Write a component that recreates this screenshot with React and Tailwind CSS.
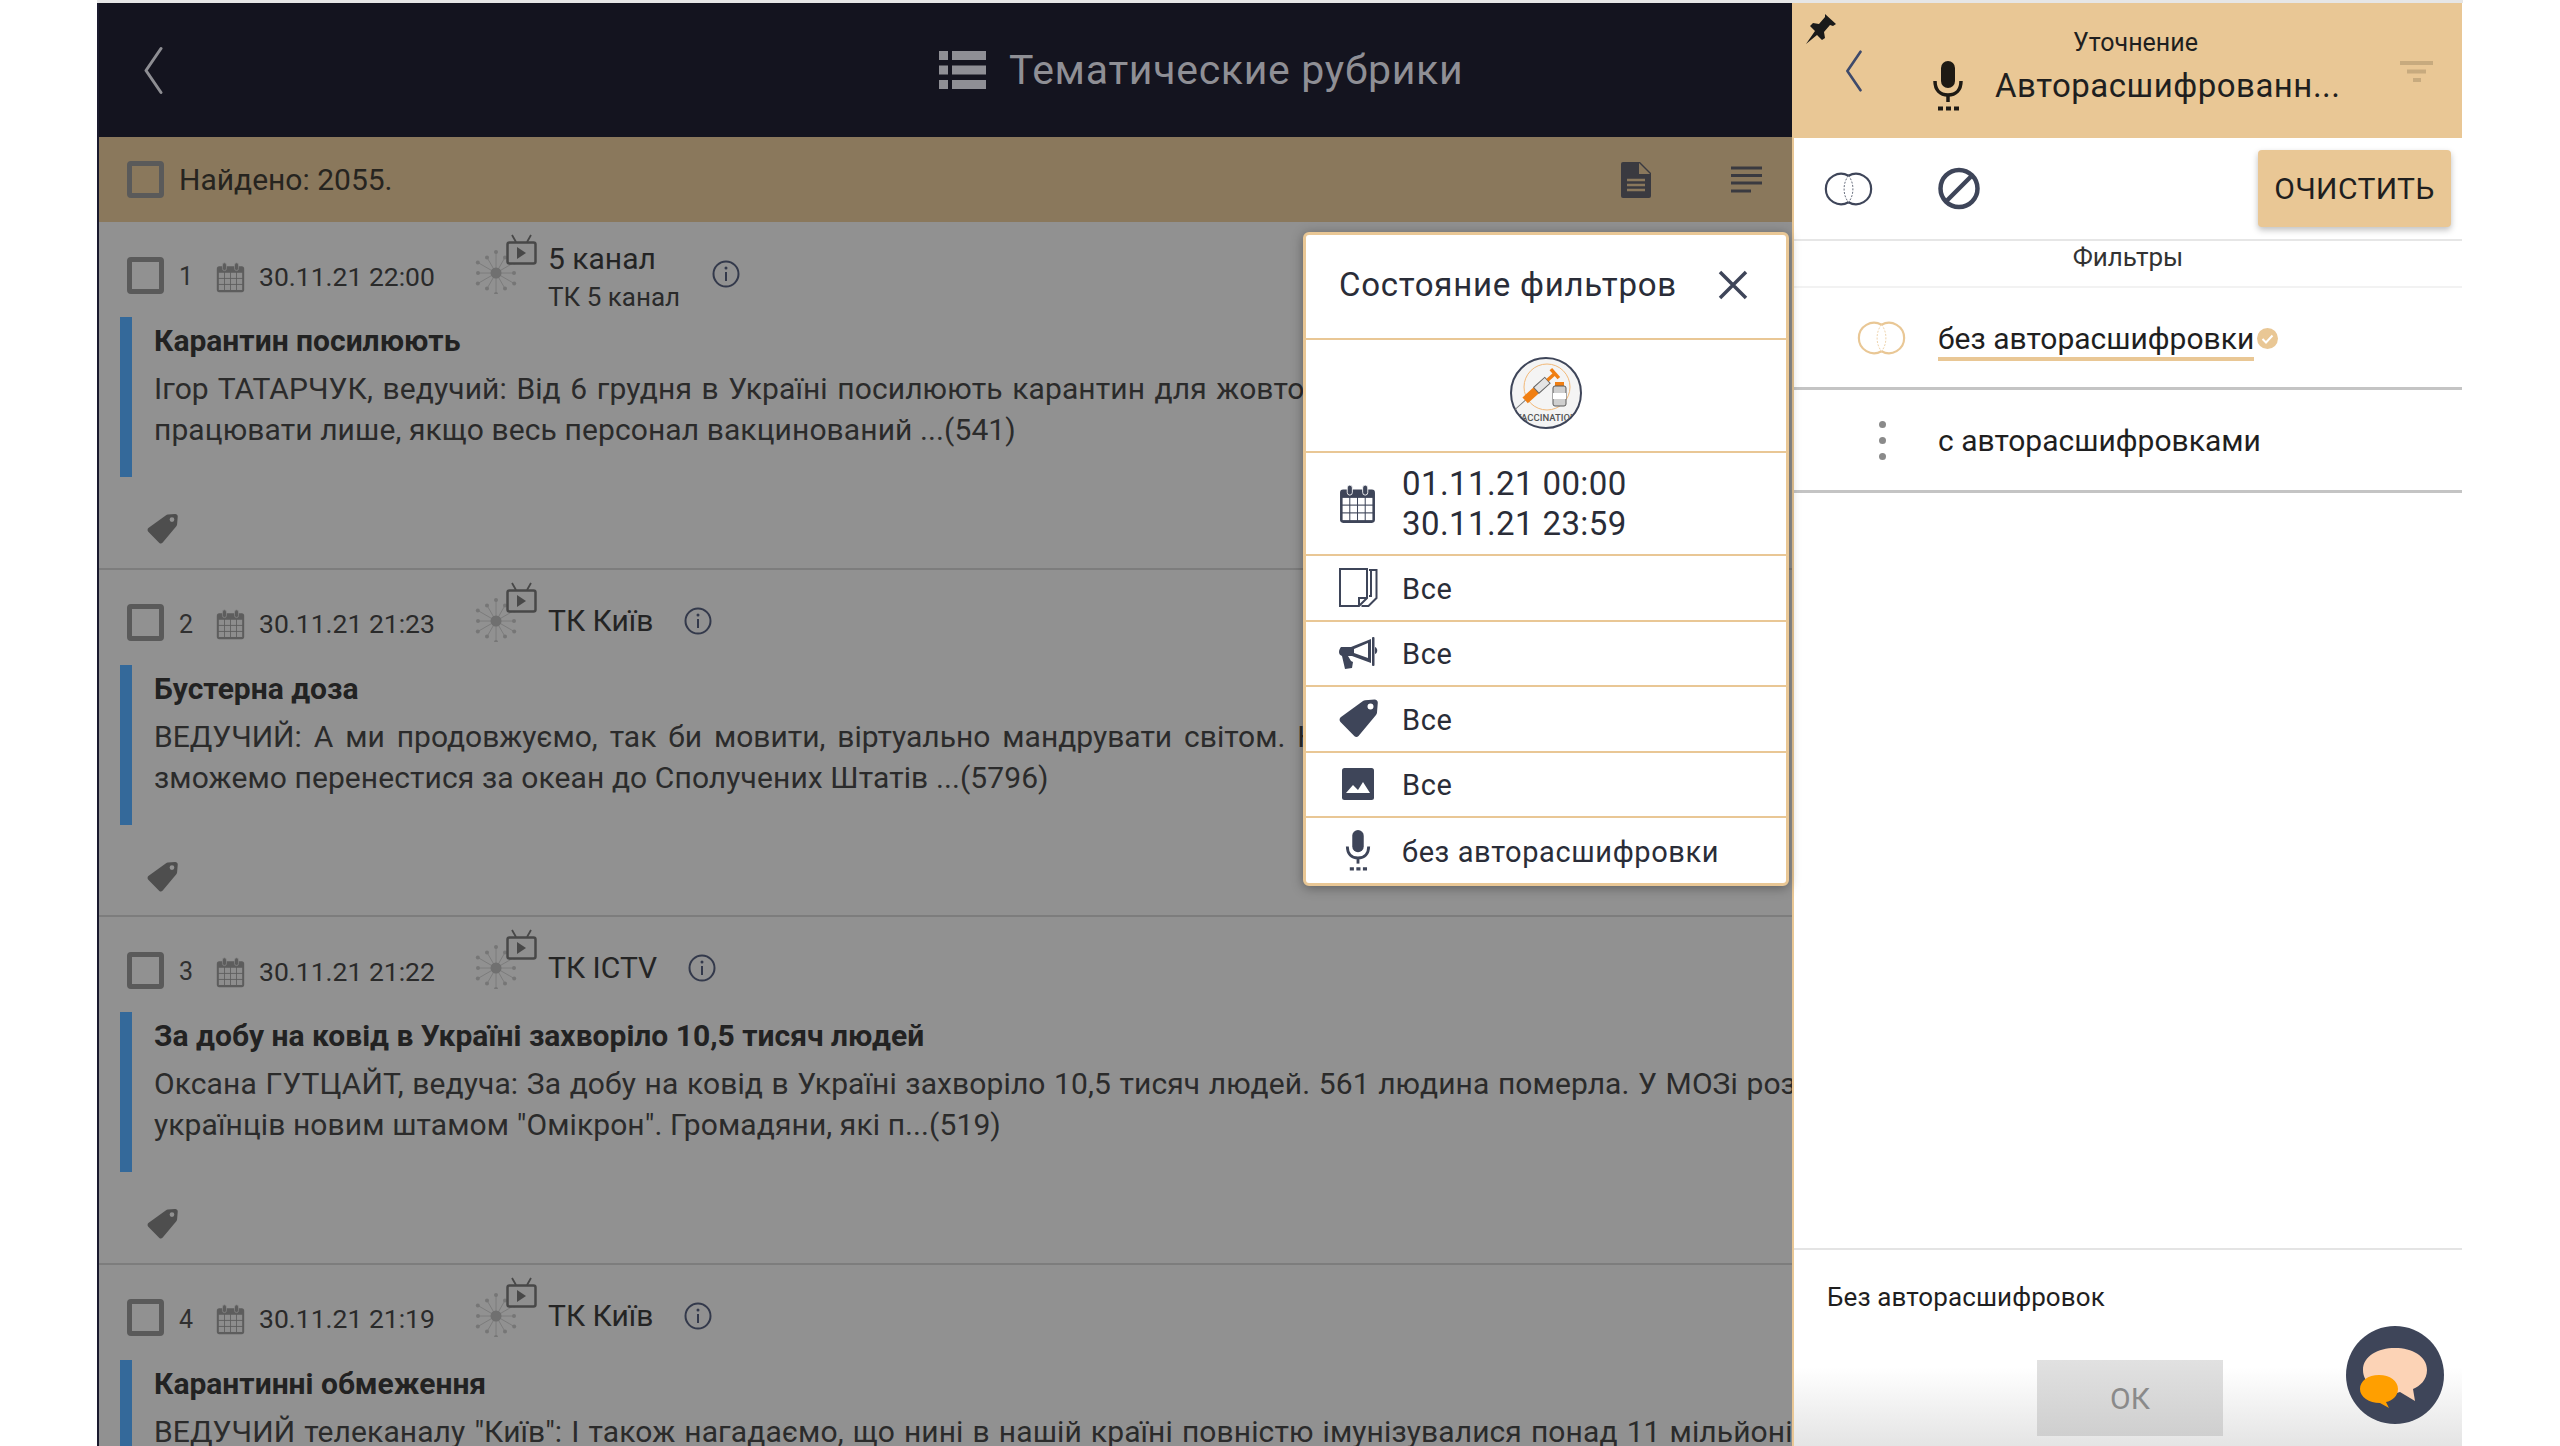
import { Fragment } from 'react'

function Chevron({ className, color }) {
  return (
    <svg className={className} viewBox="0 0 20 48" fill="none">
      <path d="M18 2L3 24l15 22" stroke={color} strokeWidth="3" strokeLinecap="round" strokeLinejoin="round" />
    </svg>
  )
}

function Checkbox() {
  return <div className="w-[37px] h-[37px] shrink-0 rounded-[4px] border-[5px] border-[#5a5a5a]" />
}

function Calendar({ className, color, cell }) {
  return (
    <svg className={className} viewBox="0 0 36 36" fill="none" preserveAspectRatio="none">
      <rect x="1" y="5" width="34" height="30" rx="3" fill={color} />
      <rect x="8" y="1" width="5" height="9" rx="2.500" fill={color} stroke={cell} strokeWidth="0.800" />
      <rect x="23" y="1" width="5" height="9" rx="2.500" fill={color} stroke={cell} strokeWidth="0.800" />
      <g fill={cell}>
        {[12.500, 19.500, 26.500].map(y =>
          [3.500, 11, 18.500, 26].map(x => <rect key={`${x}-${y}`} x={x} y={y} width="6.500" height="6" />)
        )}
      </g>
    </svg>
  )
}

function Mic({ className, color }) {
  return (
    <svg className={className} viewBox="0 0 30 50" fill="none">
      <rect x="8" y="0" width="14" height="27" rx="7" fill={color} />
      <path d="M2 20c0 9 5 14 13 14s13-5 13-14" stroke={color} strokeWidth="3.500" />
      <path d="M15 34v7" stroke={color} strokeWidth="3.500" />
      <path d="M5 47.500h5M13 47.500h5M21 47.500h5" stroke={color} strokeWidth="4" />
    </svg>
  )
}

function Tag({ className, color }) {
  return (
    <svg className={className} viewBox="0 0 39 38" fill="none">
      <path
        d="M2 17.500L24 1.500c.7-.5 1.400-.8 2.200-.8L35.500 0c2 0 3.400 1.300 3.300 3.200L38 13c0 1-.4 1.800-1 2.500L19.500 36.500c-1.100 1.300-2.800 1.300-4 .3L1.500 22.500c-1.400-1.400-1.200-3.800.5-5zM31.500 4a3 3 0 1 0 0 6 3 3 0 0 0 0-6z"
        fill={color}
        fillRule="evenodd"
      />
    </svg>
  )
}

function Rings({ className, color }) {
  return (
    <svg className={className} viewBox="0 0 50 34" fill="none">
      <path d="M25 3.500A15.500 15.500 0 1 0 25 30.500" stroke={color} strokeWidth="2.200" />
      <path d="M25 3.500A15.500 15.500 0 1 1 25 30.500" stroke={color} strokeWidth="2.200" />
      <path d="M25 3.500c-6 7-6 20 0 27 6-7 6-20 0-27z" stroke={color} strokeWidth="0.800" strokeDasharray="2 1.500" />
    </svg>
  )
}

function ChannelIcon() {
  const rays = [0, 30, 60, 90, 120, 150, 180, 210, 240, 270, 300, 330]
  return (
    <svg className="w-[62px] h-[60px] shrink-0 mb-[22px]" viewBox="0 0 62 60" fill="none">
      <g stroke="#7c7c7c" strokeWidth="1">
        {rays.map((a, i) => {
          const r = i % 2 ? 21 : 18
          const x = 21 + r * Math.cos((a * Math.PI) / 180)
          const y = 39 + r * Math.sin((a * Math.PI) / 180)
          return (
            <Fragment key={a}>
              <line x1="21" y1="39" x2={x} y2={y} />
              <circle cx={x} cy={y} r="2" fill="#767676" stroke="none" />
            </Fragment>
          )
        })}
      </g>
      <circle cx="21" cy="39" r="5.500" fill="#707070" />
      <rect x="32.500" y="8.500" width="28" height="21" rx="2" fill="#8f8f8f" stroke="#484848" strokeWidth="2.500" />
      <path d="M42 13l9 6-9 6z" fill="#484848" />
      <path d="M41 8l-4-7M52 8l4-7" stroke="#484848" strokeWidth="1.800" />
    </svg>
  )
}

function InfoIcon() {
  return (
    <svg className="w-[28px] h-[28px] shrink-0" viewBox="0 0 28 28" fill="none">
      <circle cx="14" cy="14" r="12.500" stroke="#33394b" strokeWidth="2" />
      <path d="M14 12v9" stroke="#33394b" strokeWidth="2" />
      <circle cx="14" cy="8" r="1.500" fill="#33394b" />
    </svg>
  )
}

function Row({ num, date, name, sub, infoGap, title, line1, line2, lineClass }) {
  return (
    <div className="h-[347.500px] shrink-0 border-b-2 border-[#7d7d7d]">
      <div className="h-[84px] mt-[11px] pl-[28px] flex items-center">
        <Checkbox />
        <span className="w-[52px] pl-[15px] shrink-0 text-[25px] text-[#303030] mt-[4px]">{num}</span>
        <Calendar className="w-[29px] h-[31px] shrink-0 mt-[4px]" color="#5d5d5d" cell="#8d8d8d" />
        <span className="w-[230px] pl-[14px] shrink-0 text-[26.500px] leading-none text-[#2a2a2a] mt-[4px]">{date}</span>
        <ChannelIcon />
        <div className={sub ? 'ml-[11px] flex flex-col mt-[3px]' : 'ml-[11px] flex flex-col -mt-[4px]'}>
          <span className="text-[30px] leading-[40px] text-[#242424]">{name}</span>
          {sub && <span className="text-[26px] leading-[36px] text-[#2a2a2a]">{sub}</span>}
        </div>
        <div className={infoGap}>
          <InfoIcon />
        </div>
      </div>
      <div className="flex pl-[21px]">
        <div className="w-[12px] h-[160px] shrink-0 bg-[#34699a]" />
        <div className="ml-[22px] min-w-0 flex-1 overflow-hidden whitespace-nowrap pt-[4px]">
          <div className="text-[30px] leading-[40px] font-bold text-[#222222]">{title}</div>
          <div className={lineClass}>{line1}</div>
          {line2 && <div className="text-[30px] leading-[41px] tracking-[0.1px] text-[#2b2b2b]">{line2}</div>}
        </div>
      </div>
      <Tag className="ml-[48px] mt-[37px] w-[31px] h-[30px]" color="#4e4e4e" />
    </div>
  )
}

function VaccineLogo() {
  return (
    <svg className="w-[72px] h-[72px] -mt-[5px]" viewBox="0 0 72 72" fill="none">
      <defs>
        <clipPath id="logo-clip">
          <circle cx="36" cy="36" r="34" />
        </clipPath>
      </defs>
      <circle cx="36" cy="36" r="35" fill="#f4f4f4" stroke="#3e4559" strokeWidth="2" />
      <circle cx="37" cy="30" r="23" stroke="#f2b877" strokeWidth="1" />
      <g transform="rotate(-42 30 30)">
        <path d="M-4 30h18" stroke="#777777" strokeWidth="1" />
        <rect x="10" y="26" width="15" height="8" fill="#f07f13" />
        <rect x="25" y="26" width="15" height="8" fill="#e4e4e4" stroke="#666666" strokeWidth="1" />
        <path d="M40 30h9" stroke="#f07f13" strokeWidth="3.500" />
        <path d="M50 24v12" stroke="#f07f13" strokeWidth="3.500" />
      </g>
      <rect x="45" y="25" width="9" height="4" fill="#f07f13" />
      <rect x="43" y="29" width="13" height="20" rx="2" fill="#cfcfcf" stroke="#5a5a5a" strokeWidth="1" />
      <rect x="43" y="36" width="13" height="6" fill="#ffffff" />
      <text x="36" y="64" textAnchor="middle" clipPath="url(#logo-clip)" fontFamily="Roboto, sans-serif" fontSize="9.500" fontWeight="500" fill="#555555">
        VACCINATION
      </text>
    </svg>
  )
}

function FilterState() {
  const icon = '#3e4559'
  const rows = [
    {
      label: 'Все',
      svg: (
        <svg className="w-[39px] h-[39px]" viewBox="0 0 39 39" fill="none">
          <path d="M1 1h27v29l-8 8H1z" stroke={icon} strokeWidth="2" fill="#fff" />
          <path d="M20 38v-8h8" stroke={icon} strokeWidth="2" />
          <path d="M30 2h7.500v28l-8 8h-7" stroke={icon} strokeWidth="2" />
          <path d="M32 2v26h-2" stroke={icon} strokeWidth="2" />
        </svg>
      ),
    },
    {
      label: 'Все',
      svg: (
        <svg className="w-[39px] h-[33px]" viewBox="0 0 39 33" fill="none">
          <path d="M2 10h10L32 2v24L13 19H9l3 5 2 1-1 6-7 1-3-13c-2-1-3-2-3-4s1-4 2-5z" fill={icon} />
          <path d="M15 12l14-6v15l-14-5z" fill="#fff" />
          <rect x="33" y="0" width="2.500" height="29" fill={icon} rx="1" />
          <path d="M36 10c3 1 3 6 0 7z" fill={icon} />
        </svg>
      ),
    },
    { label: 'Все', svg: <Tag className="w-[39px] h-[39px]" color={icon} /> },
    {
      label: 'Все',
      svg: (
        <svg className="w-[32px] h-[32px] ml-[3px]" viewBox="0 0 32 32" fill="none">
          <rect width="32" height="32" rx="2.500" fill={icon} />
          <path d="M4 25l7-8 5 5 5-8 7 11z" fill="#fff" />
        </svg>
      ),
    },
    { label: 'без авторасшифровки', svg: <Mic className="w-[26px] h-[41px] ml-[6px]" color={icon} /> },
  ]
  return (
    <div className="absolute left-[1303px] top-[232px] w-[486px] h-[654px] rounded-[6px] border-[3px] border-[#e9c795] bg-white shadow-[0_2px_12px_rgba(0,0,0,0.35)] font-['Roboto',sans-serif] text-[#2a2d38]">
      <div className="h-[105px] border-b-2 border-[#e9c795] flex items-center justify-between pl-[33px] pr-[38px]">
        <span className="text-[33px] tracking-[0.75px] -mt-[3px]">Состояние фильтров</span>
        <svg className="w-[30px] h-[30px] -mt-[3px]" viewBox="0 0 30 30" fill="none">
          <path d="M2 2l26 26M28 2L2 28" stroke={icon} strokeWidth="3.500" />
        </svg>
      </div>
      <div className="h-[113px] border-b-2 border-[#e9c795] flex items-center justify-center">
        <VaccineLogo />
      </div>
      <div className="h-[103px] border-b-2 border-[#e9c795] flex items-center pl-[33px]">
        <Calendar className="w-[37px] h-[40px]" color={icon} cell="#ffffff" />
        <div className="ml-[26px] text-[33px] leading-[40px] tracking-[0.4px]">
          <div>01.11.21 00:00</div>
          <div>30.11.21 23:59</div>
        </div>
      </div>
      {rows.map((r, i) => (
        <div
          key={i}
          className={i < 4 ? 'h-[65.500px] border-b-2 border-[#e9c795] flex items-center' : 'h-[65.500px] flex items-center'}
        >
          <div className="w-[96px] pl-[33px] shrink-0 flex items-center">{r.svg}</div>
          <span className="text-[29px] tracking-[0.6px] pt-[3px]">{r.label}</span>
        </div>
      ))}
    </div>
  )
}

function RefinePanel() {
  return (
    <div className="w-[670px] shrink-0 h-full flex flex-col bg-white relative text-[#1f1f1f] border-l-2 border-[#e9c795]">
      <div className="h-[135px] shrink-0 bg-[#e9c795] flex items-center relative">
        <svg className="absolute left-[11px] top-[10px] w-[32px] h-[32px]" viewBox="0 0 32 32" fill="none">
          <path d="M20 1l11 10-3 2-3-1-6 7 1 6-3 2-5-5L1 31l9-13-5-5 3-3 6 1 6-7z" fill="#1a1a1a" />
        </svg>
        <Chevron className="ml-[50px] w-[19px] h-[42px] shrink-0" color="#3e4a6b" />
        <div className="ml-[70px] flex flex-col items-start">
          <div className="w-[405px] text-center text-[25px] leading-[30px] -mt-[3px]">Уточнение</div>
          <div className="flex items-center mt-[3px]">
            <Mic className="w-[30px] h-[50px] shrink-0" color="#1e1a14" />
            <span className="ml-[32px] text-[33px] tracking-[0.5px]">Авторасшифрованн...</span>
          </div>
        </div>
        <svg className="absolute left-[606px] top-[58px] w-[33px] h-[22px]" viewBox="0 0 33 22" fill="none">
          <path d="M0 2h33M7 10.500h19M13 19h8" stroke="#c7aa7e" strokeWidth="4" />
        </svg>
      </div>
      <div className="h-[103px] shrink-0 border-b-2 border-[#e6e6e6] flex items-center pl-[30px] pr-[11px]">
        <Rings className="w-[49px] h-[34px]" color="#3e4559" />
        <svg className="ml-[65px] w-[42px] h-[43px]" viewBox="0 0 42 42" fill="none">
          <circle cx="21" cy="21" r="18.500" stroke="#3e4559" strokeWidth="4.500" />
          <path d="M8 34L34 8" stroke="#3e4559" strokeWidth="4.500" />
        </svg>
        <button className="ml-auto w-[193px] h-[77px] rounded-[4px] bg-[#e9c795] shadow-[0_3px_6px_rgba(0,0,0,0.25)] text-[30px] tracking-[0.4px]">
          ОЧИСТИТЬ
        </button>
      </div>
      <div className="h-[47px] shrink-0 border-b-2 border-[#f2f2f2] flex justify-center text-[26px] leading-[32px] text-[#333333]">
        Фильтры
      </div>
      <div className="h-[102px] shrink-0 border-b-[3px] border-[#c4c4c4] flex items-center pl-[63px]">
        <Rings className="w-[49px] h-[34px] shrink-0" color="#e9c795" />
        <span className="ml-[32px] mt-[6px] text-[30px] leading-[37px] border-b-[4px] border-[#e9c795]">без авторасшифровки</span>
        <svg className="w-[21px] h-[21px] ml-[3px] mt-[2px]" viewBox="0 0 21 21" fill="none">
          <circle cx="10.500" cy="10.500" r="10.500" fill="#e9c795" />
          <path d="M5.500 11l3.500 3.500 6.500-7" stroke="#fff" strokeWidth="2" />
        </svg>
      </div>
      <div className="h-[103px] shrink-0 border-b-[3px] border-[#c4c4c4] flex items-center pl-[63px]">
        <div className="w-[49px] flex flex-col items-center gap-[9px] shrink-0 ml-[1px]">
          <div className="w-[7px] h-[7px] rounded-full bg-[#8a8a8a]" />
          <div className="w-[7px] h-[7px] rounded-full bg-[#8a8a8a]" />
          <div className="w-[7px] h-[7px] rounded-full bg-[#8a8a8a]" />
        </div>
        <span className="ml-[31px] text-[30px]">с авторасшифровками</span>
      </div>
      <div className="flex-1 min-h-0" />
      <div className="h-[198px] shrink-0 border-t-2 border-[#e4e4e4] bg-gradient-to-b from-white from-[60%] to-[#e4e4e4] relative">
        <div className="pl-[33px] pt-[30px] text-[26px] tracking-[0.1px] leading-[34px]">Без авторасшифровок</div>
        <div className="w-[186px] h-[76px] mt-[46px] ml-[243px] bg-gradient-to-b from-[#e1e1e1] to-[#cfcfcf] flex items-center justify-center text-[30px] text-[#8a8a8a]">
          ОК
        </div>
        <svg className="absolute left-[552px] top-[76px] w-[98px] h-[98px]" viewBox="0 0 98 98" fill="none">
          <circle cx="49" cy="49" r="49" fill="#3e4559" />
          <path d="M17 44c0-14 15-22 32-22s32 8 32 22c0 10-7 16-14 19l2 12-15-9c-2 1-5 1-7 1-17 0-30-10-30-23z" fill="#fcd3b6" />
          <path d="M14 63c0-8 8-14 19-14s19 6 19 14c0 7-6 12-12 13l3 6-9-5c-11 0-20-6-20-14z" fill="#ff9f00" />
        </svg>
      </div>
    </div>
  )
}

export default function App() {
  return (
    <div className="w-[2560px] h-[1446px] bg-white overflow-hidden relative font-['Roboto',sans-serif]">
      <div className="h-[3px] bg-[#e6e6e6] mx-[97px]" />
      <div className="flex h-[1443px] ml-[97px]">
        <div className="w-[1695px] shrink-0 h-full overflow-hidden flex flex-col bg-[#919191] border-l-2 border-[#1a1a2e]">
          <div className="h-[134px] shrink-0 bg-[#14141f] flex items-center relative">
            <Chevron className="ml-[44px] w-[20px] h-[49px] shrink-0" color="#8e8e93" />
            <svg className="ml-[776px] w-[47px] h-[38px] shrink-0" viewBox="0 0 47 38" fill="#8f8f95">
              <rect width="9" height="9" />
              <rect x="13" width="34" height="9" />
              <rect y="14.500" width="9" height="9" />
              <rect x="13" y="14.500" width="34" height="9" />
              <rect y="29" width="9" height="9" />
              <rect x="13" y="29" width="34" height="9" />
            </svg>
            <span className="ml-[23px] mt-[2px] text-[41px] tracking-[0.7px] text-[#8f8f95]">Тематические рубрики</span>
          </div>
          <div className="h-[85px] shrink-0 bg-[#8a785c] flex items-center pl-[28px] pr-[30px]">
            <Checkbox />
            <span className="ml-[15px] text-[30px] text-[#26241f]">Найдено: 2055.</span>
            <svg className="ml-auto w-[30px] h-[36px]" viewBox="0 0 30 36" fill="none">
              <path d="M2 0h17l11 11v23a2 2 0 0 1-2 2H2a2 2 0 0 1-2-2V2a2 2 0 0 1 2-2z" fill="#3a3a40" />
              <path d="M18 1v11h11" fill="#8a785c" />
              <path d="M6 18h18M6 23h18M6 28h18" stroke="#8a785c" strokeWidth="2.500" />
            </svg>
            <svg className="ml-[80px] w-[31px] h-[27px]" viewBox="0 0 31 27" fill="none">
              <path d="M0 2h31M0 9.500h31M0 17h31M0 25h20" stroke="#3a3a40" strokeWidth="3" />
            </svg>
          </div>
          <Row
            num="1"
            date="30.11.21 22:00"
            name="5 канал"
            sub="ТК 5 канал"
            infoGap="ml-[32px] -mt-[2px]"
            title="Карантин посилюють"
            line1="Ігор ТАТАРЧУК, ведучий: Від 6 грудня в Україні посилюють карантин для жовтої зони. Заклади можуть"
            line2="працювати лише, якщо весь персонал вакцинований ...(541)"
            lineClass="mt-[7px] text-[30px] leading-[41px] tracking-[0.1px] text-[#2b2b2b] [word-spacing:2px]"
          />
          <Row
            num="2"
            date="30.11.21 21:23"
            name="ТК Київ"
            infoGap="ml-[31px] -mt-[4px]"
            title="Бустерна доза"
            line1="ВЕДУЧИЙ: А ми продовжуємо, так би мовити, віртуально мандрувати світом. Не виходячи з дому ми"
            line2="зможемо перенестися за океан до Сполучених Штатів ...(5796)"
            lineClass="mt-[7px] text-[30px] leading-[41px] text-[#2b2b2b] [word-spacing:4.500px]"
          />
          <Row
            num="3"
            date="30.11.21 21:22"
            name="ТК ICTV"
            infoGap="ml-[31px] -mt-[4px]"
            title="За добу на ковід в Україні захворіло 10,5 тисяч людей"
            line1="Оксана ГУТЦАЙТ, ведуча: За добу на ковід в Україні захворіло 10,5 тисяч людей. 561 людина померла. У МОЗі розповіли"
            line2={'українців новим штамом "Омікрон". Громадяни, які п...(519)'}
            lineClass="mt-[7px] text-[30px] leading-[41px] tracking-[0.1px] text-[#2b2b2b] [word-spacing:1px]"
          />
          <Row
            num="4"
            date="30.11.21 21:19"
            name="ТК Київ"
            infoGap="ml-[31px] -mt-[4px]"
            title="Карантинні обмеження"
            line1={'ВЕДУЧИЙ телеканалу "Київ": І також нагадаємо, що нині в нашій країні повністю імунізувалися понад 11 мільйонів'}
            lineClass="mt-[7px] text-[30px] leading-[41px] tracking-[0.1px] text-[#2b2b2b] [word-spacing:1.500px]"
          />
        </div>
        <RefinePanel />
      </div>
      <FilterState />
    </div>
  )
}
